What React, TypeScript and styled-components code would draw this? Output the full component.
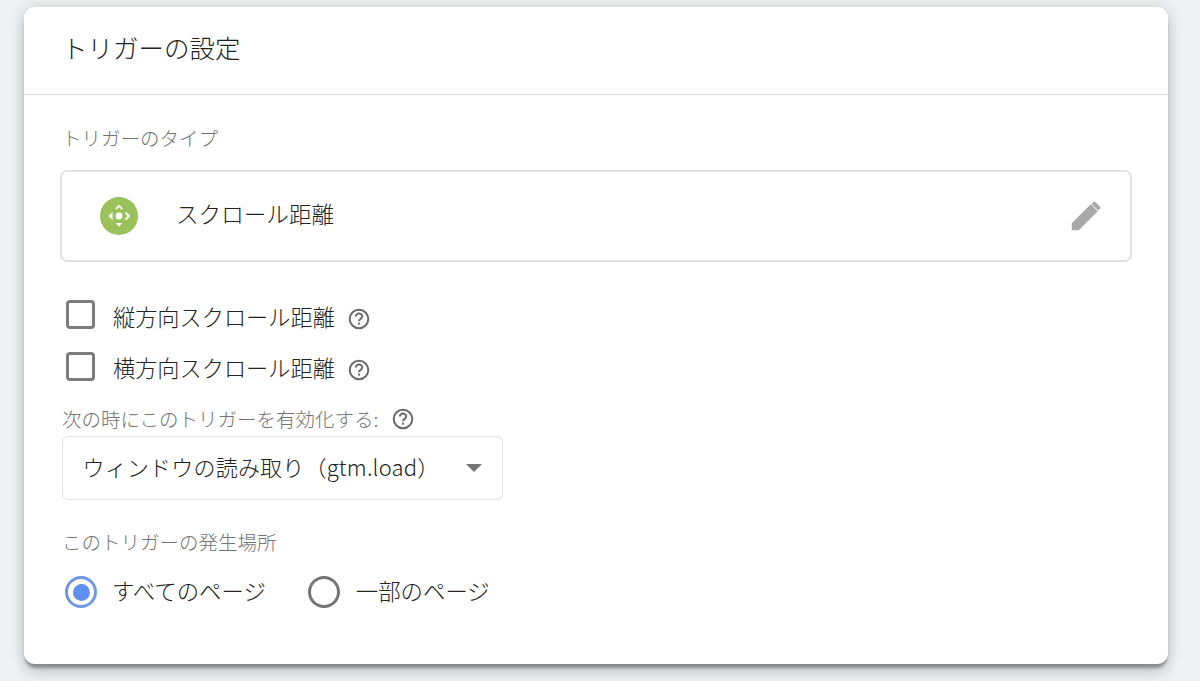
import React from "react";
import styled, { createGlobalStyle } from "styled-components";

const Global = createGlobalStyle`
  html, body { margin: 0; padding: 0; background: #eceef0; height: 100%; overflow: hidden; }
  body { font-family: "Noto Sans CJK JP", "Roboto", sans-serif; font-weight: 300; }
`;
const Page = styled.div`
  width: 1200px; height: 681px; box-sizing: border-box; padding: 7px 32px 0 24px;
  background: #eff1f2; overflow: hidden;
`;
const Card = styled.section`
  height: 657px; background: #fff; border-radius: 11px;
  box-shadow: 0 5px 3px -1px rgba(0,0,0,.3), 0 0 16px rgba(0,0,0,.14), 0 10px 14px rgba(0,0,0,.12);
`;
const Header = styled.header`
  height: 88px; box-sizing: border-box; padding: 22px 0 0 38px; border-bottom: 1px solid #dcdcdc;
`;
const Title = styled.h1`
  margin: 0; font-size: 25.5px; line-height: 36px; font-weight: 300; color: #222; white-space: nowrap;
`;
const Body = styled.div`
  padding: 29px 36px 0 36px; display: flex; flex-direction: column;
`;
const Label = styled.div<{ $gap?: number }>`
  font-size: 19.5px; line-height: 28px; color: #747474; margin-left: 2px; white-space: nowrap;
  display: flex; align-items: center; gap: ${p => p.$gap ?? 0}px;
`;
const TypeBox = styled.div`
  margin-top: 18px; height: 92px; box-sizing: border-box; border: 2px solid #e2e2e2; border-radius: 7px;
  display: flex; align-items: center; padding: 0 28px 0 38px;
`;
const TypeBadge = styled.span`
  width: 38px; height: 38px; flex: none; display: flex;
`;
const TypeName = styled.span`
  margin: 0 0 6px 38px; font-size: 22.6px; color: #222; flex: 1; white-space: nowrap;
`;
const Checks = styled.div`
  margin-top: 38px; display: flex; flex-direction: column; gap: 23px;
`;
const CheckRow = styled.label`
  display: flex; align-items: center; height: 29px; padding-left: 6px;
`;
const Box = styled.span`
  width: 29px; height: 29px; box-sizing: border-box; border: 3px solid #7d7d7d; border-radius: 4px; flex: none;
`;
const RowText = styled.span<{ $drop: number }>`
  margin: ${p => p.$drop}px 0 0 18px; font-size: 22.2px; line-height: 29px; color: #222; white-space: nowrap;
`;
const Help = styled.svg<{ $drop?: number }>`
  width: 24px; height: 24px; flex: none; margin: ${p => p.$drop ?? 0}px 0 0 ${p => (p.$drop ? 12 : 0)}px;
`;
const SelectLabel = styled(Label)`
  margin-top: 24px; height: 28px;
`;
const Select = styled.div`
  margin: 3px 0 0 2px; width: 441px; height: 64px; box-sizing: border-box; border: 1.5px solid #e2e2e2; border-radius: 6px;
  display: flex; align-items: center; justify-content: space-between; padding: 0 20px 0 19.5px;
`;
const SelectText = styled.span`
  margin-bottom: 4px; font-size: 22px; letter-spacing: .2px; color: #222; white-space: nowrap;
`;
const Caret = styled.span`
  width: 0; height: 0; border-left: 8px solid transparent; border-right: 8px solid transparent; border-top: 8px solid #757575;
`;
const PlaceLabel = styled(Label)`
  margin-top: 28px;
`;
const Radios = styled.div`
  margin-top: 18px; display: flex; align-items: center; padding-left: 5px;
`;
const Radio = styled.span<{ $on?: boolean }>`
  width: 32px; height: 32px; box-sizing: border-box; border-radius: 50%; flex: none;
  border: 3px solid ${p => (p.$on ? "#6f97e6" : "#757575")};
  display: flex; align-items: center; justify-content: center;
  &::after { content: ""; width: 17px; height: 17px; border-radius: 50%; background: ${p => (p.$on ? "#5f8ff0" : "transparent")}; }
`;
const RadioText = styled.span<{ $lead: number; $gap: number }>`
  margin: 0 ${p => p.$gap}px 4px ${p => p.$lead}px; font-size: 22.4px; line-height: 32px; color: #222; white-space: nowrap;
`;

const HelpIcon = ({ drop }: { drop?: number }) => (
  <Help viewBox="0 0 24 24" $drop={drop}>
    <circle cx="12" cy="12" r="9.3" fill="none" stroke="#6a6a6a" strokeWidth="2" />
    <path d="M8.8 9.6a3.2 3.2 0 0 1 6.4 0c0 2.2-3.2 2.4-3.2 4.6" fill="none" stroke="#6a6a6a" strokeWidth="2" />
    <rect x="11" y="15.6" width="2" height="2" fill="#6a6a6a" />
  </Help>
);

const Pencil = () => (
  <svg width="32" height="32" viewBox="0 0 24 24" fill="#a8a8a8">
    <path d="M1.3 22.7v-5.2L15.6 3.200l5.200 5.200L6.500 22.700z" />
    <path d="M17.100 1.900c.5-.5 1.200-.5 1.700 0l3.300 3.300c.5.5.5 1.200 0 1.700l-1.300 1.300-5-5z" transform="translate(.3 -.3)" />
  </svg>
);

const TriggerIcon = () => (
  <svg width="38" height="38" viewBox="0 0 38 38">
    <circle cx="19" cy="19" r="19" fill="#9bc15b" />
    <circle cx="19" cy="19" r="3.4" fill="#fff" />
    <path d="M15.800 12 19 8.800 22.200 12" fill="none" stroke="#eef5e2" strokeWidth="2" />
    <path d="M15.500 26 19 29.500 22.500 26z" fill="#fff" />
    <path d="M12.500 15.500 8.800 19 12.500 22.500" fill="#fff" stroke="#fff" strokeWidth="1" />
    <path d="M25.500 15.500 29 19 25.500 22.500" fill="none" stroke="#fff" strokeWidth="2" />
  </svg>
);

export default function App() {
  return (
    <Page>
      <Global />
      <Card>
        <Header>
          <Title>トリガーの設定</Title>
        </Header>
        <Body>
          <Label>トリガーのタイプ</Label>
          <TypeBox>
            <TypeBadge><TriggerIcon /></TypeBadge>
            <TypeName>スクロール距離</TypeName>
            <Pencil />
          </TypeBox>
          <Checks>
            <CheckRow><Box /><RowText $drop={4}>縦方向スクロール距離</RowText><HelpIcon drop={8} /></CheckRow>
            <CheckRow><Box /><RowText $drop={1}>横方向スクロール距離</RowText><HelpIcon drop={7} /></CheckRow>
          </Checks>
          <SelectLabel $gap={12}>次の時にこのトリガーを有効化する:<HelpIcon /></SelectLabel>
          <Select>
            <SelectText>ウィンドウの読み取り（gtm.load）</SelectText>
            <Caret />
          </Select>
          <PlaceLabel>このトリガーの発生場所</PlaceLabel>
          <Radios>
            <Radio $on />
            <RadioText $lead={15} $gap={42}>すべてのページ</RadioText>
            <Radio />
            <RadioText $lead={16} $gap={0}>一部のページ</RadioText>
          </Radios>
        </Body>
      </Card>
    </Page>
  );
}
